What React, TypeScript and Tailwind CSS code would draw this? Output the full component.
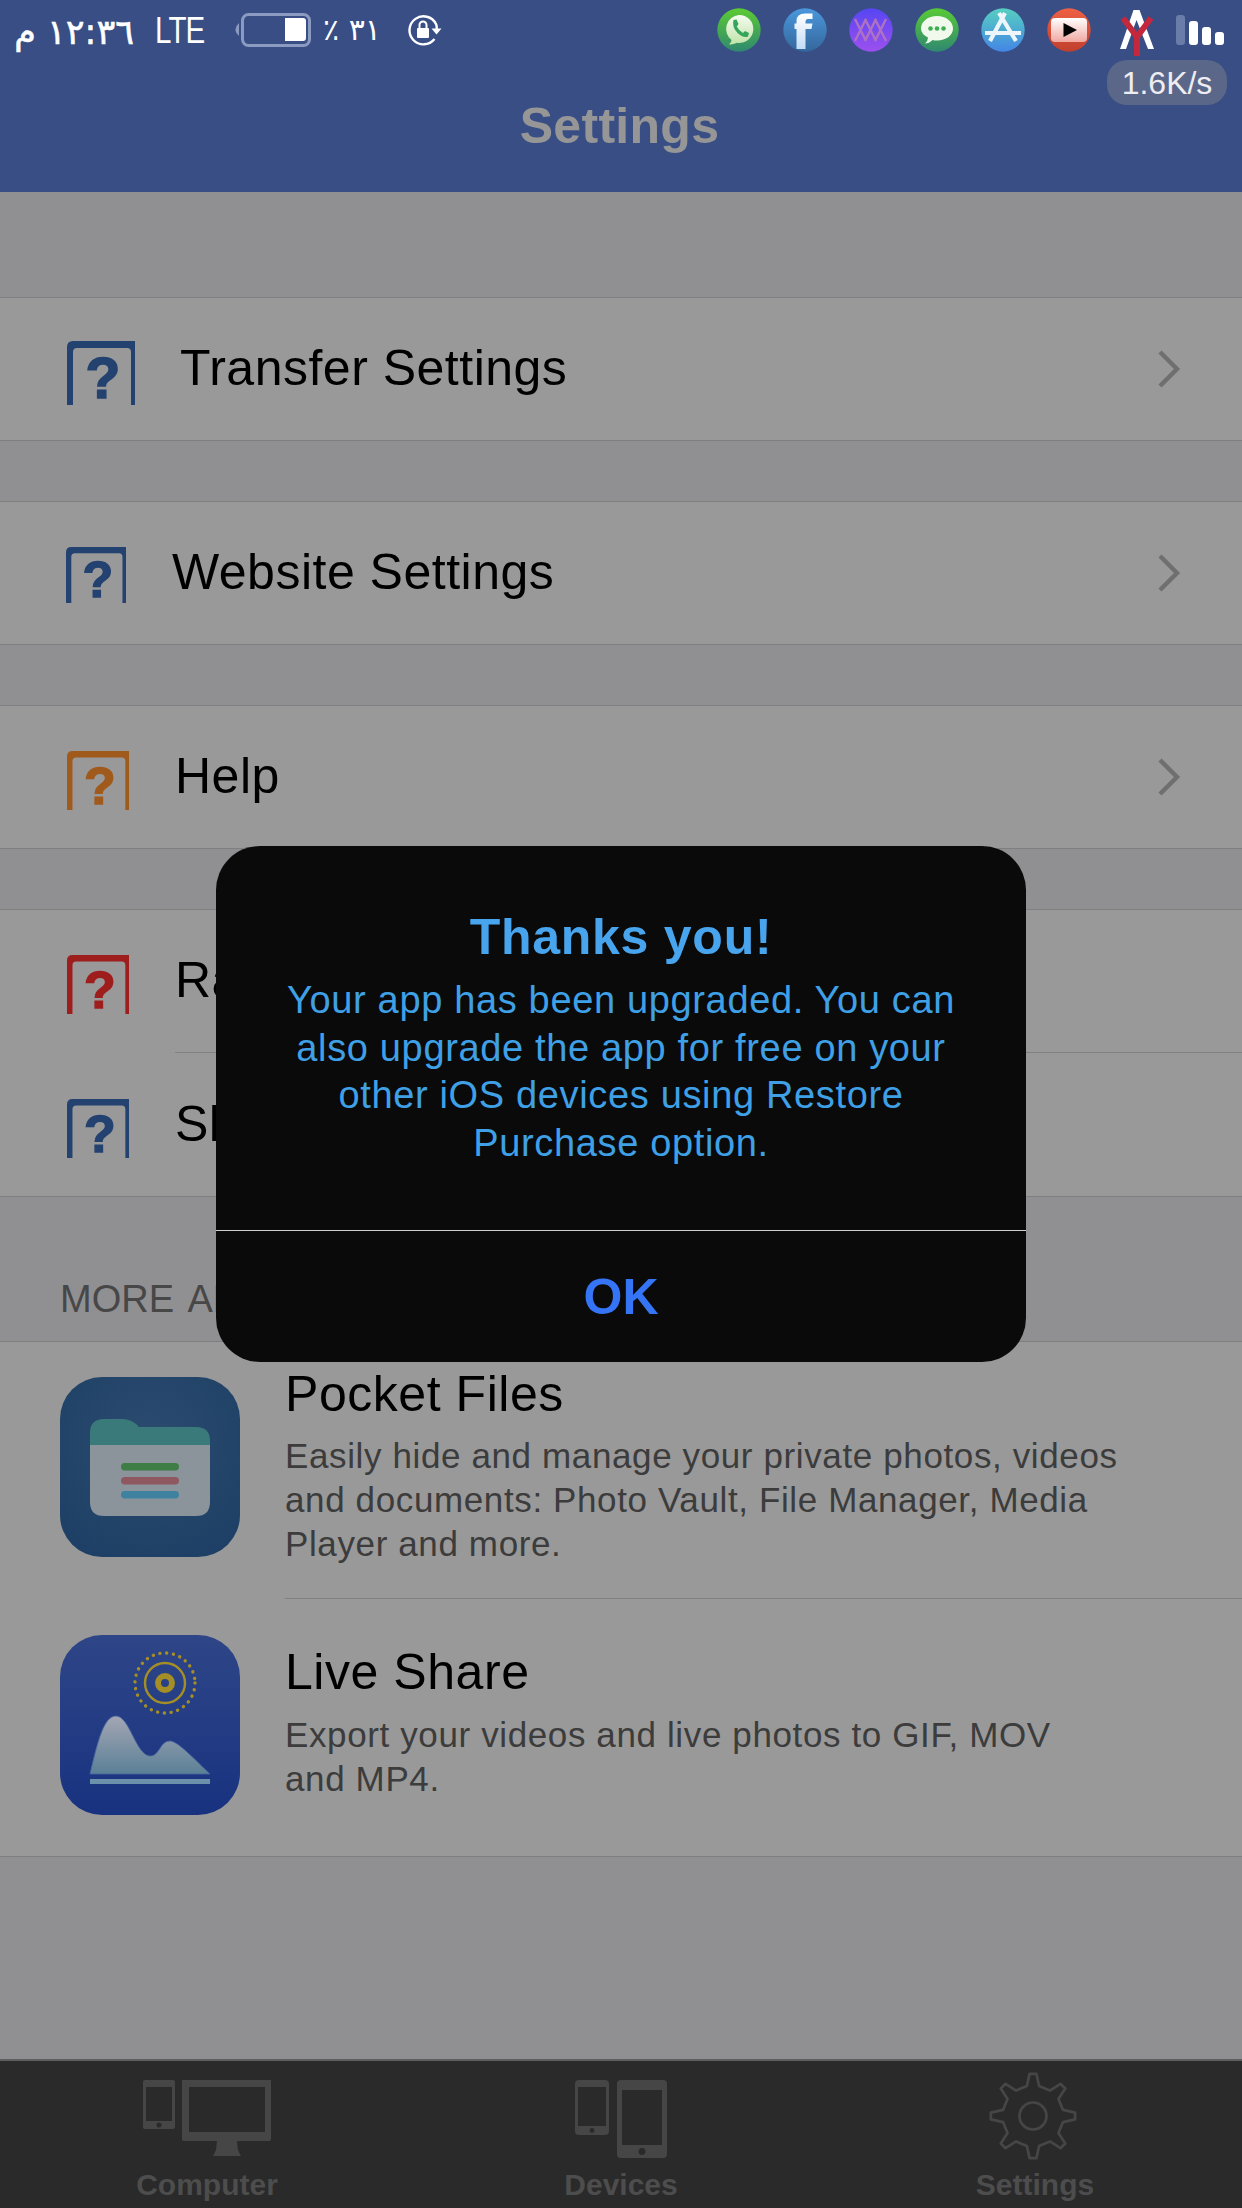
import React from 'react';

const gearPath = (() => {
  const pts: string[] = [];
  for (let i = 0; i < 8; i++) {
    const a = (i * Math.PI) / 4 - Math.PI / 2;
    const at = (r: number, d: number) => {
      const x = 50 + r * Math.cos(a + d);
      const y = 50 + r * Math.sin(a + d);
      return `${x.toFixed(1)} ${y.toFixed(1)}`;
    };
    pts.push(at(34, -0.2), at(47, -0.08), at(47, 0.08), at(34, 0.2));
  }
  return `M${pts.join(' L')} Z`;
})();

const QuestionIcon = ({ color, className }: { color: string; className: string }) => (
  <svg viewBox="0 0 68 64" preserveAspectRatio="none" className={`overflow-visible ${className}`}>
    <path d="M0 64 V6 Q0 0 6 0 H68 V64 H64 V11 Q64 7 60 7 H10 Q6 7 6 11 V64 Z" fill={color} />
    <text x="36" y="57" textAnchor="middle" fontSize="57" fontWeight="700" fontFamily="Liberation Sans, sans-serif" fill={color} stroke={color} strokeWidth="1.6">?</text>
  </svg>
);

const Row = ({ iconClass, rowClass, label, color, chevron }: {
  iconClass: string;
  rowClass: string;
  label: string;
  color: string;
  chevron?: boolean;
}) => (
  <div className={`flex items-center ${rowClass}`}>
    <QuestionIcon color={color} className={`${iconClass} shrink-0`} />
    <span className="mb-[2px] text-[50px] leading-[56px] tracking-[0.5px] text-black">{label}</span>
    {chevron && (
      <svg viewBox="0 0 24 40" className="ml-auto mr-[61px] w-[24px] h-[40px]">
        <path d="M3 3 L20 20 L3 37" fill="none" stroke="#6f6f6f" strokeWidth="4.4" />
      </svg>
    )}
  </div>
);

const Section = ({ children, gap = 'h-[60px]' }: { children: React.ReactNode; gap?: string }) => (
  <>
    <div className={gap} />
    <div className="bg-[#999999] border-y border-[#7f7f82]">{children}</div>
  </>
);

const AppBubble = ({ id, from, to, children }: { id: string; from: string; to: string; children: React.ReactNode }) => (
  <svg viewBox="0 0 44 44" className="w-[44px] h-[44px]">
    <defs>
      <linearGradient id={id} x1="0" y1="0" x2="0" y2="1">
        <stop offset="0" stopColor={from} />
        <stop offset="1" stopColor={to} />
      </linearGradient>
    </defs>
    <circle cx="22" cy="22" r="21.7" fill={`url(#${id})`} />
    {children}
  </svg>
);

const StatusBar = () => (
  <div className="h-[60px] flex items-start text-white relative">
    <span dir="rtl" className="ml-[18px] mt-[12px] w-[116px] text-[35px] leading-[40px] [-webkit-text-stroke:0.6px_white] font-['DejaVu_Sans',sans-serif] whitespace-nowrap text-left">١٢:٣٦ م</span>
    <span className="ml-[21px] mt-[11px] w-[60px] origin-left scale-x-[0.82] text-[36px] leading-[40px] tracking-[-1px] font-['Liberation_Sans',sans-serif]">LTE</span>
    <svg viewBox="0 0 82 34" className="ml-[17px] mt-[13px] w-[82px] h-[34px]">
      <path d="M7 10 Q0 16.5 7 23 Z" fill="#8b9ac0" />
      <rect x="10.5" y="1.5" width="67" height="31" rx="6" fill="none" stroke="#8b9ac0" strokeWidth="3" />
      <path d="M53 5 H71 Q74 5 74 8 V25 Q74 28 71 28 H53 Z" fill="#fff" />
    </svg>
    <span dir="rtl" className="ml-[9px] mt-[13px] w-[66px] text-[30px] leading-[34px] tracking-[7px] font-['DejaVu_Sans',sans-serif] whitespace-nowrap text-left">٣١ ٪</span>
    <svg viewBox="0 0 34 32" className="ml-[19px] mt-[14px] w-[34px] h-[32px]">
      <path d="M26.5 25 A14 14 0 1 1 28 10 Q29 12 28.6 15" fill="none" stroke="#fff" strokeWidth="2.4" />
      <path d="M23.5 14.5 H33.5 L28.5 20.5 Z" fill="#fff" />
      <rect x="9" y="14" width="12" height="10" rx="1" fill="#fff" />
      <path d="M11.5 14 V11 A3.5 3.5 0 0 1 18.5 11 V14" fill="none" stroke="#fff" strokeWidth="2" />
    </svg>

    <div className="ml-auto mt-[8px] flex items-start gap-[22px]">
      <AppBubble id="wa" from="#5ccb33" to="#2f8870">
        <defs>
          <linearGradient id="wab" x1="0" y1="0" x2="0" y2="1">
            <stop offset="0" stopColor="#f5fbf0" />
            <stop offset="1" stopColor="#bfe3a8" />
          </linearGradient>
        </defs>
        <path d="M22 7 A14 14 0 1 1 20 34.8 Q16 37 12 36.5 Q14.5 34.5 14.5 32 A14 14 0 0 1 22 7 Z" fill="url(#wab)" />
        <path d="M16.5 12 L19.5 11.5 L21.5 16 L19.8 18.5 Q22 23 26 25 L28 23 L32 25 L31 28.5 Q27 30.5 21 25.5 Q14.5 19 16.5 12 Z" fill="#33a65c" />
      </AppBubble>
      <AppBubble id="fb" from="#4a98dc" to="#35669c">
        <defs>
          <linearGradient id="fbf" x1="0" y1="0" x2="0" y2="1">
            <stop offset="0" stopColor="#ffffff" />
            <stop offset="1" stopColor="#c4dcf6" />
          </linearGradient>
        </defs>
        <path d="M13.5 41 V21 H11.5 V15.5 H13.5 V13 Q13.5 5.5 22 5.5 H29.5 V11 H25 Q22.5 11 22.5 14 V15.5 H29.5 L28.5 21 H22.5 V41 Z" fill="url(#fbf)" />
      </AppBubble>
      <AppBubble id="ms" from="#5646f2" to="#9c50ee">
        <path d="M6 11 L17 33 M17 11 L6 33 M16 11 L27 33 M27 11 L16 33 M26 11 L37 33 M37 11 L26 33" stroke="#ad72c4" strokeWidth="2.4" fill="none" />
      </AppBubble>
      <AppBubble id="im" from="#58cb36" to="#308870">
        <path d="M22 8 C31 8 38 13.5 38 20.5 C38 27.5 31 32.5 22 32.5 Q19.5 32.5 17.5 32 Q14 35.5 10 35.5 Q13 33 13 29.5 Q6 26 6 20.5 C6 13.5 13 8 22 8 Z" fill="#f0f9ec" />
        <circle cx="15.5" cy="20.5" r="2.3" fill="#3fae52" />
        <circle cx="22" cy="20.5" r="2.3" fill="#3fae52" />
        <circle cx="28.5" cy="20.5" r="2.3" fill="#3fae52" />
      </AppBubble>
      <AppBubble id="as" from="#56cfc0" to="#4486e6">
        <path d="M24 5 L9 33 M18 5 L35 33 M4 25 H40" stroke="#eef6fb" strokeWidth="4.2" fill="none" />
      </AppBubble>
      <AppBubble id="yt" from="#ee6044" to="#c03f2e">
        <defs>
          <linearGradient id="ytb" x1="0" y1="0" x2="0" y2="1">
            <stop offset="0" stopColor="#ffffff" />
            <stop offset="1" stopColor="#f0a8a0" />
          </linearGradient>
        </defs>
        <rect x="4" y="10" width="36" height="24" rx="4" fill="url(#ytb)" />
        <path d="M16.5 15 L30 22 L16.5 29 Z" fill="#000" />
      </AppBubble>
    </div>

    <svg viewBox="0 0 40 50" className="ml-[27px] mt-[8px] w-[40px] h-[50px]">
      <path d="M15.5 2 H21.5 L36 41 H30 L18.5 12 L8 41 H2 Z" fill="#fff" />
      <path d="M5 10 L19 29 L33 10 M19 29 V48" fill="none" stroke="#c3283c" strokeWidth="6" />
    </svg>
    <div className="ml-[18px] mr-[18px] mt-[15px] flex items-end gap-[4px] h-[30px]">
      <div className="w-[9px] h-[30px] rounded-[3px] bg-[#6a7ca8]" />
      <div className="w-[9px] h-[24px] rounded-[3px] bg-white" />
      <div className="w-[9px] h-[18px] rounded-[3px] bg-white" />
      <div className="w-[9px] h-[13px] rounded-[3px] bg-white" />
    </div>
    <div className="absolute left-[1107px] top-[60px] w-[120px] h-[45px] rounded-[20px] bg-[#5b6788] flex items-center justify-center text-[32px] text-[#ededf2] font-['Liberation_Sans',sans-serif]">1.6K/s</div>
  </div>
);

const PocketFiles = () => (
  <svg viewBox="0 0 180 180" className="w-[180px] h-[180px] shrink-0">
    <defs>
      <radialGradient id="pf" cx="0.5" cy="0.35" r="0.7">
        <stop offset="0" stopColor="#2b4c6f" />
        <stop offset="1" stopColor="#1f4066" />
      </radialGradient>
    </defs>
    <rect width="180" height="180" rx="42" fill="url(#pf)" />
    <path d="M30 68 V56 Q30 42 44 42 H62 Q72 42 79 50 H136 Q150 50 150 64 V68 Z" fill="#3a7a7a" />
    <path d="M30 68 H150 V125 Q150 139 136 139 H44 Q30 139 30 125 Z" fill="#8b939b" />
    <rect x="61" y="86" width="58" height="7.5" rx="3.7" fill="#3e7d46" />
    <rect x="61" y="100" width="58" height="7.5" rx="3.7" fill="#8f5860" />
    <rect x="61" y="114" width="58" height="7.5" rx="3.7" fill="#3f829f" />
  </svg>
);

const LiveShare = () => (
  <svg viewBox="0 0 180 180" className="w-[180px] h-[180px] shrink-0">
    <defs>
      <linearGradient id="ls" x1="0" y1="0" x2="0" y2="1">
        <stop offset="0" stopColor="#2e4687" />
        <stop offset="1" stopColor="#193280" />
      </linearGradient>
      <linearGradient id="mt" x1="0" y1="0" x2="0" y2="1">
        <stop offset="0" stopColor="#a4a6b4" />
        <stop offset="1" stopColor="#5a8096" />
      </linearGradient>
    </defs>
    <rect width="180" height="180" rx="42" fill="url(#ls)" />
    <circle cx="105" cy="48" r="30" fill="none" stroke="#a58e25" strokeWidth="3.4" strokeLinecap="round" strokeDasharray="0.1 6.7" />
    <circle cx="105" cy="48" r="20" fill="none" stroke="#a58e25" strokeWidth="2.4" />
    <circle cx="105" cy="48" r="7" fill="none" stroke="#a58e25" strokeWidth="6" />
    <path d="M30 139 C38 105 44 81 56 81 C70 81 76 122 91 121 C100 120 100 106 110 106 C118 106 136 126 150 139 Z" fill="url(#mt)" stroke="#4664a0" strokeWidth="0.8" />
    <rect x="30" y="144" width="120" height="5" fill="#6b92aa" />
  </svg>
);

const navIcon = 'fill-[#464646]';

const ComputerIcon = () => (
  <svg viewBox="0 0 128 76" className="w-[128px] h-[76px]">
    <path className={navIcon} fillRule="evenodd" d="M2 0 H30 Q32 0 32 2 V47 Q32 49 30 49 H2 Q0 49 0 47 V2 Q0 0 2 0 Z M3 7 V41 H29 V7 Z" />
    <circle cx="16" cy="45" r="2.5" fill="#2a2a2a" />
    <path className={navIcon} fillRule="evenodd" d="M41 0 H128 V59 Q128 61 126 61 H41 Q39 61 39 59 V0 Z M46 7 V52 H122 V7 Z" />
    <path className={navIcon} d="M74 61 H94 L95 70 L98 76 H70 L73 70 Z" />
  </svg>
);

const DevicesIcon = () => (
  <svg viewBox="0 0 92 78" className="w-[92px] h-[78px]">
    <path className={navIcon} fillRule="evenodd" d="M4 0 H30 Q34 0 34 4 V51 Q34 55 30 55 H4 Q0 55 0 51 V4 Q0 0 4 0 Z M3 7 V46 H31 V7 Z" />
    <circle cx="17" cy="50.5" r="2.4" fill="#2a2a2a" />
    <path className={navIcon} fillRule="evenodd" d="M46 0 H88 Q92 0 92 4 V74 Q92 78 88 78 H46 Q42 78 42 74 V4 Q42 0 46 0 Z M47 10 V65 H87 V10 Z" />
    <circle cx="67" cy="71.5" r="3.4" fill="#2a2a2a" />
  </svg>
);

const GearIcon = () => (
  <svg viewBox="0 0 100 100" className="w-[90px] h-[90px] mr-[4px]">
    <path d={gearPath} fill="none" stroke="#464646" strokeWidth="3" strokeLinejoin="round" />
    <circle cx="50" cy="50" r="15" fill="none" stroke="#464646" strokeWidth="3" />
  </svg>
);

const TabItem = ({ icon, label, iconClass }: { icon: React.ReactNode; label: string; iconClass: string }) => (
  <div className="flex flex-col items-center">
    <div className={`flex items-end ${iconClass}`}>{icon}</div>
    <span className="text-[30px] leading-[34px] font-bold text-[#4d4d4d]">{label}</span>
  </div>
);

export default function App() {
  return (
    <div className="relative w-[1242px] h-[2208px] overflow-hidden flex flex-col bg-[#909093] font-['Liberation_Sans',sans-serif]">
      {/* Header */}
      <div className="h-[192px] shrink-0 bg-[#384e85]">
        <StatusBar />
        <div className="flex justify-center pt-[38px] pr-[3px]">
          <h1 className="text-[50px] leading-[56px] font-bold tracking-[0.3px] text-[#969696]">Settings</h1>
        </div>
      </div>

      {/* Settings list */}
      <Section gap="h-[105px]">
        <Row rowClass="h-[142px]" iconClass="ml-[67px] mr-[45px] mt-[8px] w-[68px] h-[64px]" color="#234270" label="Transfer Settings" chevron />
      </Section>
      <Section>
        <Row rowClass="h-[142px]" iconClass="ml-[66px] mr-[46px] mt-[4px] w-[60px] h-[56px]" color="#234270" label="Website Settings" chevron />
      </Section>
      <Section>
        <Row rowClass="h-[142px]" iconClass="ml-[67px] mr-[46px] mt-[7px] w-[62px] h-[59px]" color="#a05a1c" label="Help" chevron />
      </Section>
      <Section>
        <Row rowClass="h-[142px]" iconClass="ml-[67px] mr-[46px] mt-[7px] w-[62px] h-[59px]" color="#9e1d1d" label="Rate App" />
        <div className="ml-[175px] h-px bg-[#808082]" />
        <Row rowClass="h-[143px]" iconClass="ml-[67px] mr-[46px] mt-[8px] w-[62px] h-[59px]" color="#234270" label="Share App" />
      </Section>

      {/* More apps */}
      <div className="h-[144px] shrink-0 flex items-end pb-[20px] pl-[60px]">
        <span className="text-[38px] leading-[44px] text-[#474747] [word-spacing:5px]">MORE APPS</span>
      </div>
      <div className="bg-[#999999] border-y border-[#7f7f82]">
        <div className="h-[257px] flex pl-[60px]">
          <div className="pt-[35px]"><PocketFiles /></div>
          <div className="ml-[45px] flex-1 pt-[24px] border-b border-[#808082]">
            <div className="text-[50px] leading-[56px] tracking-[0.55px] text-black">Pocket Files</div>
            <p className="mt-[12px] w-[860px] text-[35px] leading-[44px] tracking-[0.62px] text-[#3c3c3c]">Easily hide and manage your private photos, videos and documents: Photo Vault, File Manager, Media Player and more.</p>
          </div>
        </div>
        <div className="h-[257px] flex pl-[60px]">
          <div className="pt-[36px]"><LiveShare /></div>
          <div className="ml-[45px] flex-1 pt-[45px]">
            <div className="text-[50px] leading-[56px] tracking-[0.55px] text-black">Live Share</div>
            <p className="mt-[13px] w-[800px] text-[35px] leading-[44px] tracking-[0.62px] text-[#3c3c3c]">Export your videos and live photos to GIF, MOV and MP4.</p>
          </div>
        </div>
      </div>
      <div className="flex-1" />

      {/* Tab bar */}
      <div className="h-[149px] shrink-0 bg-[#2a2a2a] border-t-2 border-[#5e5e5e] grid grid-cols-3">
        <TabItem icon={<ComputerIcon />} label="Computer" iconClass="h-[107px] pb-[12px]" />
        <TabItem icon={<DevicesIcon />} label="Devices" iconClass="h-[107px] pb-[10px]" />
        <TabItem icon={<GearIcon />} label="Settings" iconClass="h-[107px] pb-[7px]" />
      </div>

      {/* Alert */}
      <div className="absolute inset-0 flex items-center justify-center">
        <div className="w-[810px] h-[516px] rounded-[44px] bg-[#0a0a0a] flex flex-col">
          <div className="h-[385px] pt-[63px] text-center border-b border-[#d0d0d0]">
            <div className="text-[50px] leading-[56px] font-bold tracking-[0.75px] text-[#48a4ec]">Thanks you!</div>
            <p className="mt-[12px] px-[40px] text-[38px] leading-[47.5px] tracking-[0.65px] text-[#3fa0e6]">Your app has been upgraded. You can also upgrade the app for free on your other iOS devices using Restore Purchase option.</p>
          </div>
          <div className="flex-1 flex items-center justify-center">
            <span className="text-[50px] leading-[56px] font-bold text-[#3574f5]">OK</span>
          </div>
        </div>
      </div>
    </div>
  );
}
